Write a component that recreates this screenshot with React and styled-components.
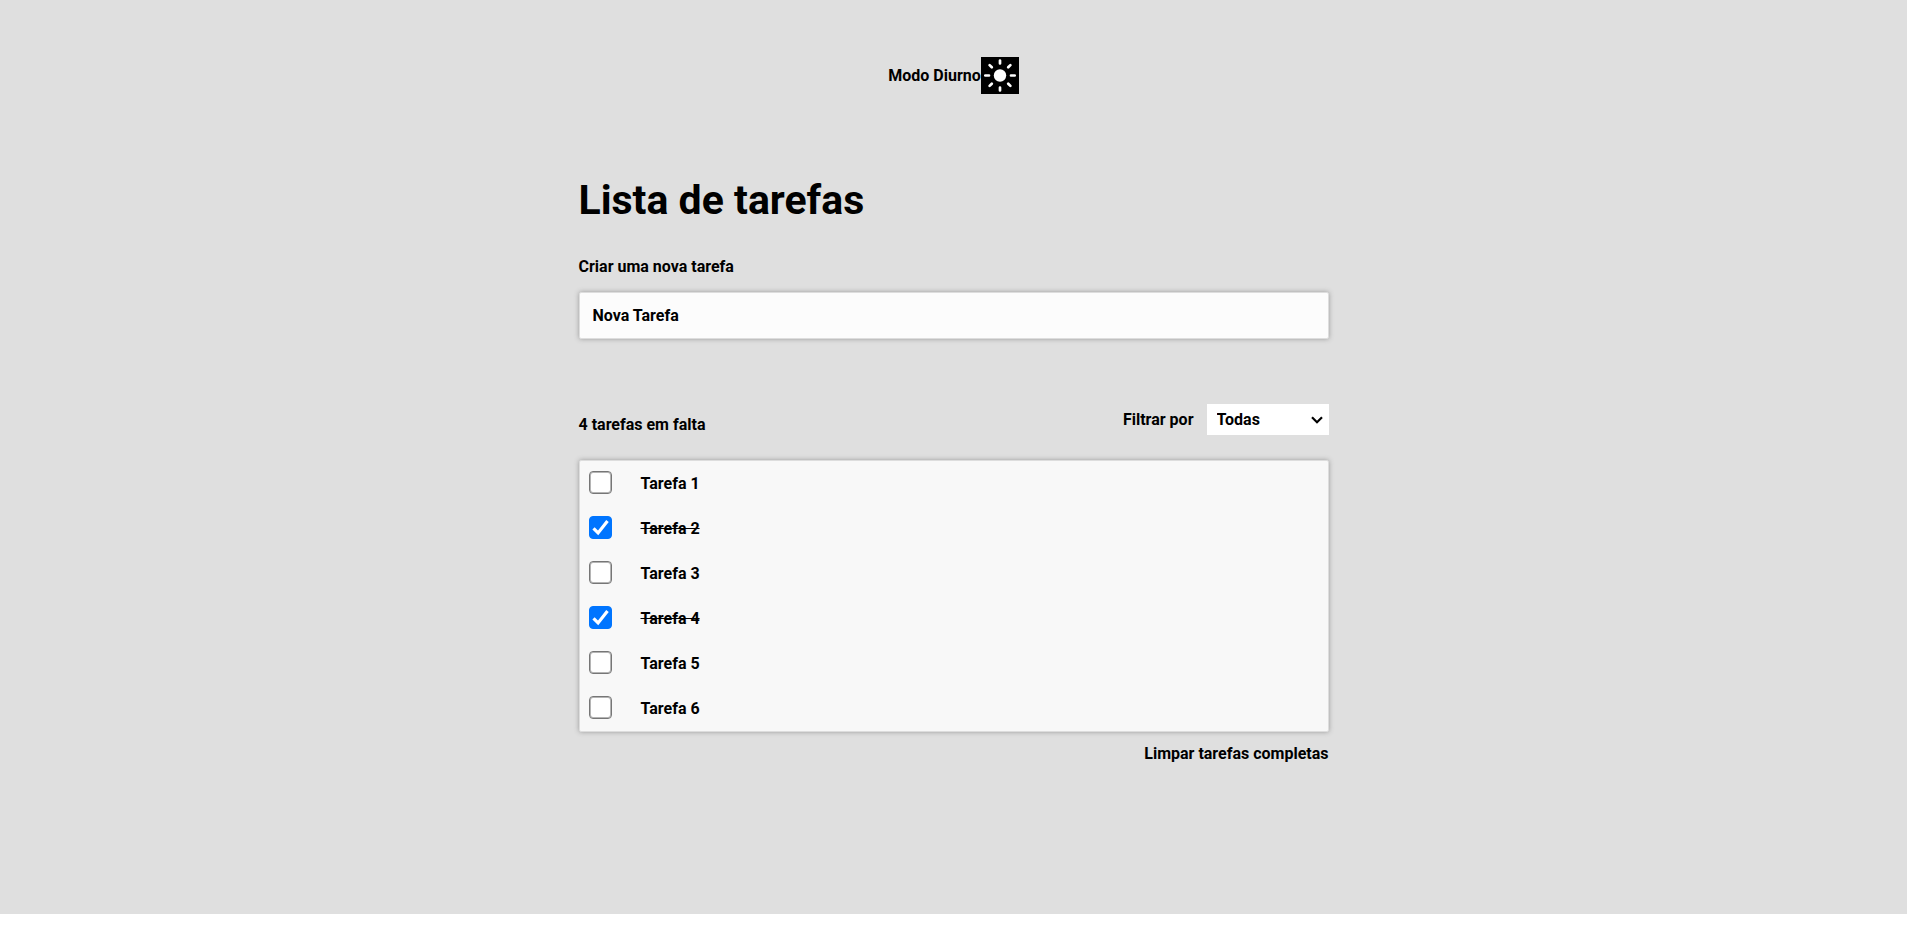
import React, { useState } from "react";
import styled, { createGlobalStyle } from "styled-components";

const GlobalStyle = createGlobalStyle`
  * { box-sizing: border-box; }
  body {
    margin: 0;
    background: #fff;
    color: #000;
    font: bold 16px/20px Roboto, sans-serif;
  }
  button, input, select { font: inherit; color: inherit; }
`;

const Page = styled.div`
  display: flex;
  flex-direction: column;
  align-items: center;
  padding: 57px 16px 150px;
  background: #dfdfdf;
`;

const ModeSwitch = styled.div`
  display: flex;
  align-items: center;
`;

const ModeButton = styled.button`
  display: flex;
  width: 38px;
  height: 37px;
  padding: 0;
  border: 0;
  background: #000;
  cursor: pointer;
`;

const Content = styled.main`
  display: flex;
  flex-direction: column;
  width: 100%;
  max-width: 750px;
  padding-top: 81px;
`;

const Title = styled.h1`
  margin: 0 0 32px;
  font-size: 41px;
  line-height: 50px;
`;

const FieldLabel = styled.label`
  margin-bottom: 15px;
`;

const TaskInput = styled.input`
  width: 100%;
  height: 47px;
  padding: 0 13px;
  border: 1px solid #ddd;
  border-radius: 2px;
  background: #fcfcfc;
  box-shadow: 0 0 5px #999;
  outline: 0;
  &::placeholder { color: #000; opacity: 1; }
`;

const Toolbar = styled.div`
  display: flex;
  justify-content: space-between;
  align-items: flex-end;
  margin: 65px 0 25px;
`;

const Filter = styled.div`
  display: flex;
  align-items: center;
  gap: 13px;
`;

const SelectBox = styled.div`
  display: grid;
  grid-template-columns: 122px;
  align-items: center;
  > * { grid-area: 1 / 1; }
  > svg {
    justify-self: end;
    margin-right: 6px;
    pointer-events: none;
  }
`;

const FilterSelect = styled.select`
  appearance: none;
  width: 100%;
  height: 31px;
  padding: 0 10px;
  border: 0;
  border-radius: 0;
  background: #fff;
`;

const TaskList = styled.ul`
  margin: 0;
  padding: 0;
  list-style: none;
  border: 1px solid #ddd;
  border-radius: 2px;
  background: #f8f8f8;
  box-shadow: 0 0 5px #999;
`;

const Task = styled.li`
  display: flex;
  align-items: center;
  height: 45px;
  padding: 0 9px;
`;

const CheckBox = styled.span`
  display: grid;
  margin: 0 29px 2px 0;
  > * { grid-area: 1 / 1; }
  > svg { pointer-events: none; }
`;

const Check = styled.input`
  appearance: none;
  width: 23px;
  height: 23px;
  margin: 0;
  border: 1px solid #767676;
  border-radius: 4px;
  background: #fff;
  box-shadow: inset 0 0 0 1px #b4b4b4;
  &:checked {
    border-color: #0075ff;
    background: #0075ff;
    box-shadow: none;
  }
`;

const TaskName = styled.label`
  text-decoration: ${({ $done }) => ($done ? "line-through" : "none")};
`;

const ClearButton = styled.button`
  align-self: flex-end;
  margin-top: 12px;
  padding: 0;
  border: 0;
  background: none;
  cursor: pointer;
`;

const Sun = () => (
  <svg width="38" height="37" viewBox="0 0 38 37" aria-hidden="true">
    <circle cx="19" cy="18.5" r="6.2" fill="#fff" />
    <path
      d="M19 3.500v3M19 30.500v3M4.300 18.500h3.700M30 18.500h3.700M8.600 8.100l2.200 2.200M27.200 26.700l2.200 2.200M29.400 8.100l-2.200 2.200M10.800 26.700l-2.200 2.200"
      stroke="#fff"
      strokeWidth="2.7"
      strokeLinecap="round"
    />
  </svg>
);

const Chevron = () => (
  <svg width="12" height="8" viewBox="0 0 12 8" aria-hidden="true">
    <path d="M1 1.200L6 6.200l5-5" fill="none" stroke="#000" strokeWidth="2.200" />
  </svg>
);

const Tick = () => (
  <svg width="23" height="23" viewBox="0 0 23 23" aria-hidden="true">
    <path
      d="M4.500 12.300l4.600 4.600L18.500 5"
      fill="none"
      stroke="#fff"
      strokeWidth="3.200"
    />
  </svg>
);

const initialTasks = [1, 2, 3, 4, 5, 6].map((id) => ({
  id,
  name: `Tarefa ${id}`,
  done: id === 2 || id === 4,
}));

export default function App() {
  const [tasks, setTasks] = useState(initialTasks);
  const [filter, setFilter] = useState("all");

  const toggle = (id) =>
    setTasks(tasks.map((t) => (t.id === id ? { ...t, done: !t.done } : t)));
  const visible = tasks.filter(
    (t) => filter === "all" || (filter === "done") === t.done
  );

  return (
    <>
      <GlobalStyle />
      <Page>
        <ModeSwitch>
          <span id="mode">Modo Diurno</span>
          <ModeButton type="button" aria-labelledby="mode">
            <Sun />
          </ModeButton>
        </ModeSwitch>
        <Content>
          <Title>Lista de tarefas</Title>
          <FieldLabel htmlFor="new-task">Criar uma nova tarefa</FieldLabel>
          <TaskInput id="new-task" placeholder="Nova Tarefa" />
          <Toolbar>
            <span>{tasks.filter((t) => !t.done).length} tarefas em falta</span>
            <Filter>
              <label htmlFor="filter">Filtrar por</label>
              <SelectBox>
                <FilterSelect
                  id="filter"
                  value={filter}
                  onChange={(e) => setFilter(e.target.value)}
                >
                  <option value="all">Todas</option>
                  <option value="done">Completas</option>
                  <option value="open">Em falta</option>
                </FilterSelect>
                <Chevron />
              </SelectBox>
            </Filter>
          </Toolbar>
          <TaskList>
            {visible.map((t) => (
              <Task key={t.id}>
                <CheckBox>
                  <Check
                    type="checkbox"
                    id={`task-${t.id}`}
                    checked={t.done}
                    onChange={() => toggle(t.id)}
                  />
                  {t.done && <Tick />}
                </CheckBox>
                <TaskName htmlFor={`task-${t.id}`} $done={t.done}>
                  {t.name}
                </TaskName>
              </Task>
            ))}
          </TaskList>
          <ClearButton
            type="button"
            onClick={() => setTasks(tasks.filter((t) => !t.done))}
          >
            Limpar tarefas completas
          </ClearButton>
        </Content>
      </Page>
    </>
  );
}
